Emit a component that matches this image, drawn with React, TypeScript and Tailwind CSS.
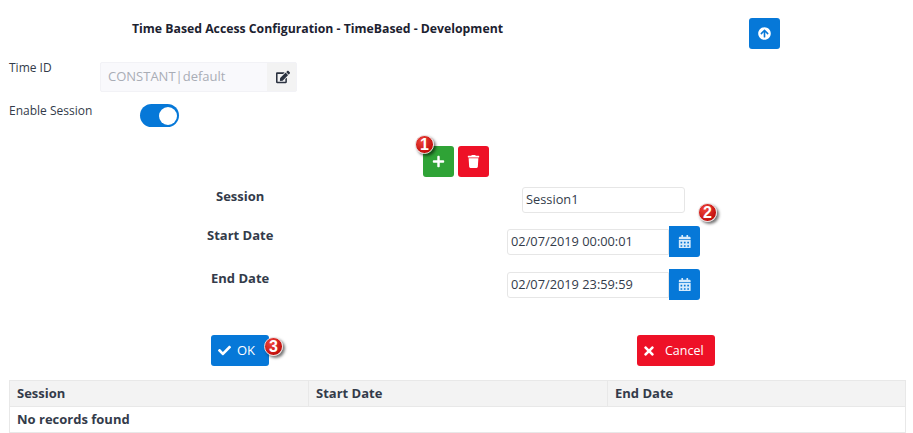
import { FaArrowCircleUp, FaCalendarAlt, FaCheck, FaEdit, FaPlus, FaTimes, FaTrash } from 'react-icons/fa';

function Badge({ n, className }: { n: number; className: string }) {
  return (
    <span
      className={`absolute flex h-[19px] w-[19px] items-center justify-center rounded-full border border-[#e8d8d8] bg-[radial-gradient(circle_at_35%_30%,#f0443c,#c4120f_70%)] font-['Liberation_Sans',sans-serif] text-[16px] leading-none font-bold text-white shadow-[2px_2px_3px_rgba(0,0,0,0.55)] ${className}`}
    >
      {n}
    </span>
  );
}

function DateField({ value, className }: { value: string; className: string }) {
  return (
    <div className={`ml-[507px] flex h-[31px] w-[193px] ${className}`}>
      <div className="my-auto flex h-[26px] w-[162px] items-center rounded-l-[3px] border border-[#e6e6e6] pl-[3px] text-[12.8px] text-[#333b4a]">
        {value}
      </div>
      <button className="flex w-[31px] items-center justify-center rounded-r-[3px] bg-[#0678d8] text-[13.5px] text-[#d5eafb]">
        <FaCalendarAlt />
      </button>
    </div>
  );
}

export default function App() {
  return (
    <div className="h-[433px] w-[913px] overflow-hidden bg-white font-['Open_Sans','Noto_Sans',sans-serif] text-[#333b4a]">
      <div className="flex h-[49px] items-start pt-[18px]">
        <h1 className="mt-[2px] ml-[132px] w-[617px] text-[12.25px] leading-[18px] font-bold text-[#1c2230]">
          Time Based Access Configuration - TimeBased - Development
        </h1>
        <button className="flex h-[31px] w-[31px] items-center justify-center rounded-[3px] bg-[#0678d8] text-[13px] text-white">
          <FaArrowCircleUp />
        </button>
      </div>

      <div className="mt-[13px] flex h-[30px]">
        <label className="ml-[9px] w-[91px] text-[12px] leading-[12px]">Time ID</label>
        <div className="flex h-[30px] w-[197px] rounded-[2px] border border-[#f2f2f6] bg-[#f9f9fc]">
          <div className="flex flex-1 items-center pl-[7px] text-[13px] text-[#a9adb6]">CONSTANT|default</div>
          <div className="flex w-[29px] items-center justify-center bg-[#f3f3f3] pl-[2px] text-[14px] text-[#2b3240]">
            <FaEdit />
          </div>
        </div>
      </div>

      <div className="mt-[12px] flex h-[23px]">
        <label className="ml-[9px] w-[131px] text-[12px] leading-[14px]">Enable Session</label>
        <div className="flex h-[23px] w-[39px] items-center justify-end rounded-full bg-[#0678d8] pr-[2px]">
          <span className="h-[18px] w-[18px] rounded-full bg-white" />
        </div>
      </div>

      <div className="relative mt-[19px] ml-[423px] flex h-[31px] gap-[4px]">
        <button className="flex h-[31px] w-[31px] items-center justify-center rounded-[3px] bg-[#2fa336] text-[13px] text-white">
          <FaPlus />
        </button>
        <button className="flex h-[31px] w-[31px] items-center justify-center rounded-[3px] bg-[#ee1127] text-[13px] text-white">
          <FaTrash />
        </button>
        <Badge n={1} className="top-[-11px] left-[-8px]" />
      </div>

      <div className="relative">
        <div className="absolute top-[11px] left-[216px] text-[13px] leading-[16px] font-bold">Session</div>
        <div className="absolute top-[50px] left-[207px] text-[13px] leading-[16px] font-bold">Start Date</div>
        <div className="absolute top-[93px] left-[211px] text-[13px] leading-[16px] font-bold">End Date</div>
        <Badge n={2} className="top-[26px] left-[698px]" />
      </div>

      <div className="mt-[10px] ml-[522px] flex h-[26px] w-[163px] items-center rounded-[3px] border border-[#e6e6e6] pl-[3px] text-[12.8px]">
        Session1
      </div>
      <DateField value="02/07/2019 00:00:01" className="mt-[13px]" />
      <DateField value="02/07/2019 23:59:59" className="mt-[12px]" />

      <div className="mt-[35px] flex h-[31px]">
        <div className="relative ml-[211px] w-[426px]">
          <button className="flex h-[31px] w-[58px] items-center rounded-[3px] bg-[#0678d8] pl-[7px] text-[13px] text-white">
            <FaCheck className="mr-[6px] text-[13px]" />
            <span className="mt-[1px]">OK</span>
          </button>
          <Badge n={3} className="top-[2px] left-[53px]" />
        </div>
        <button className="flex h-[31px] w-[78px] items-center rounded-[3px] bg-[#ee1127] pl-[5px] text-[12.5px] text-white">
          <FaTimes className="mr-[9px] text-[14px]" />
          <span className="mt-[2px]">Cancel</span>
        </button>
      </div>

      <table className="mt-[14px] ml-[9px] w-[897px] table-fixed border-collapse text-[13px]">
        <thead>
          <tr className="h-[26px] bg-[#f3f3f3]">
            <th className="w-[299px] border border-[#e8e8e8] pl-[7px] text-left font-bold">Session</th>
            <th className="w-[299px] border border-[#e8e8e8] pl-[7px] text-left font-bold">Start Date</th>
            <th className="border border-[#e8e8e8] pl-[7px] text-left font-bold">End Date</th>
          </tr>
        </thead>
        <tbody>
          <tr className="h-[26px]">
            <td colSpan={3} className="border border-[#e8e8e8] pl-[7px] font-bold">
              No records found
            </td>
          </tr>
        </tbody>
      </table>
    </div>
  );
}
